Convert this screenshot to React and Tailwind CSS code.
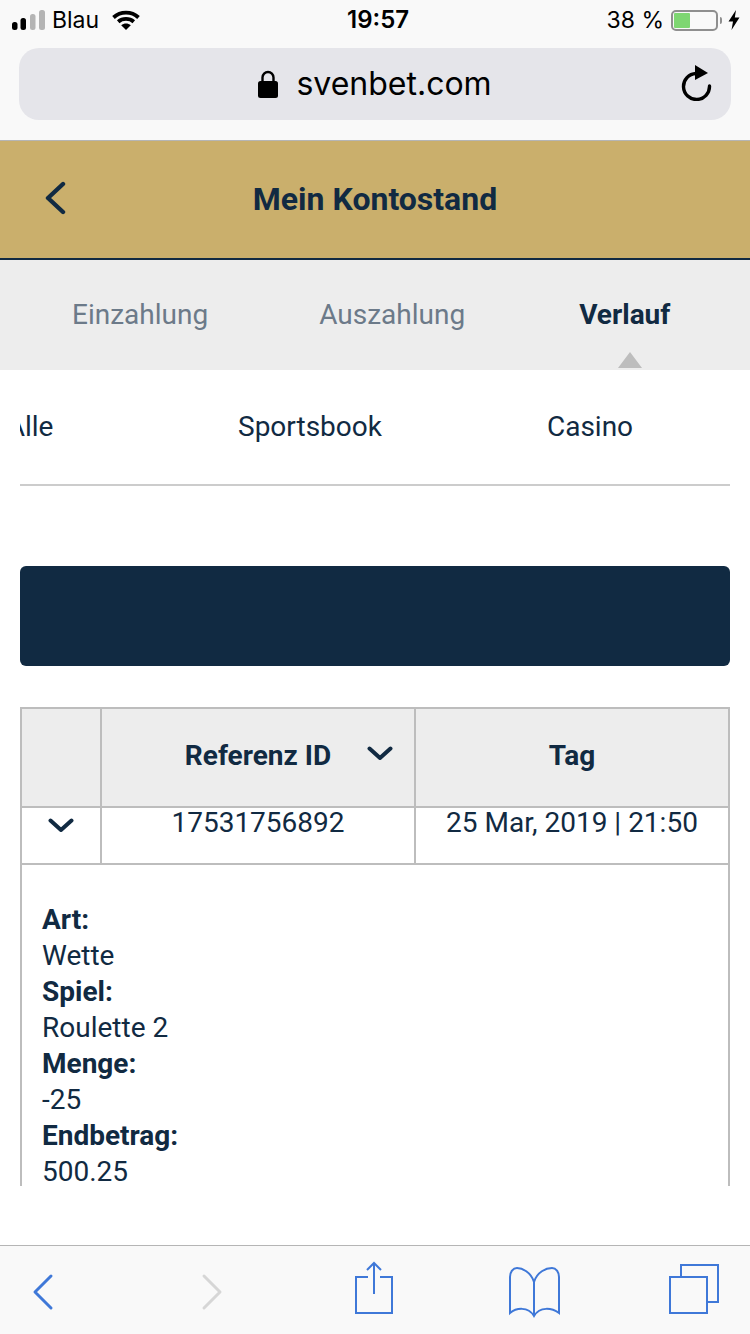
const NAVY = "#112a42";

function Chevron({ className }) {
  return (
    <svg className={className} viewBox="0 0 26 14" fill="none" stroke="#112a42" strokeWidth="4" strokeLinecap="round" strokeLinejoin="round">
      <path d="M2.5 2.5 13 12 23.5 2.5" />
    </svg>
  );
}

function StatusBar() {
  return (
    <div className="relative flex h-[40px] items-center pl-[12px] pr-[10px] font-['Inter',sans-serif] text-[23px] text-black">
      {/* signal */}
      <svg className="h-[20px] w-[34px]" viewBox="0 0 34 20">
        <rect x="0" y="12" width="5.5" height="8" rx="2.5" fill="#000" />
        <rect x="8.5" y="8" width="5.5" height="12" rx="2.5" fill="#000" />
        <rect x="18" y="4" width="5.5" height="16" rx="2.5" fill="#b4b4b4" />
        <rect x="27" y="0" width="6" height="20" rx="2.5" fill="#b4b4b4" />
      </svg>
      <span className="ml-[6px] leading-none">Blau</span>
      <svg className="ml-[13px] h-[20px] w-[28px]" viewBox="0 0 28 20" fill="none" stroke="#000">
        <path d="M1.5 7.5C8.5 1 19.5 1 26.5 7.5" strokeWidth="3.8" />
        <path d="M6.2 11.8C10.6 8 17.4 8 21.8 11.8" strokeWidth="3.8" />
        <path d="M14 20 9.2 15.2C12 13 16 13 18.8 15.2Z" fill="#000" stroke="none" />
      </svg>
      <span className="absolute left-[347px] text-[24px] font-semibold leading-none">19:57</span>
      <div className="ml-auto flex items-center">
        <span className="leading-none">38 %</span>
        <div className="ml-[7px] flex h-[21px] w-[47px] items-stretch rounded-[5px] border-2 border-[#8f8f8f] p-[1px]">
          <div className="w-[16px] rounded-[1px] bg-[#7ed672]" />
        </div>
        <div className="ml-[2px] h-[7px] w-[2px] rounded-r-full bg-[#8f8f8f]" />
        <svg className="ml-[6px] h-[20px] w-[12px]" viewBox="0 0 12 20" fill="#000">
          <path d="M8 0 0.5 11.5H5L3.5 20 11.5 7.5H6.8Z" />
        </svg>
      </div>
    </div>
  );
}

function UrlBar() {
  return (
    <div className="relative mx-[19px] mt-[8px] flex h-[72px] items-center justify-center rounded-[20px] bg-[#e5e5ea]">
      <svg className="h-[28px] w-[20px]" viewBox="0 0 20 28">
        <path d="M4.5 12V7.5a5.5 5.5 0 0 1 11 0V12" fill="none" stroke="#000" strokeWidth="2.4" />
        <rect x="0" y="11" width="20" height="17" rx="2.5" fill="#000" />
      </svg>
      <span className="ml-[18px] font-['Inter',sans-serif] text-[32px] leading-none text-black">svenbet.com</span>
      <svg className="absolute right-[18px] top-[17px] h-[36px] w-[32px]" viewBox="0 0 32 36" fill="none">
        <path d="M15 8.5A13 13 0 1 0 28.5 21" stroke="#000" strokeWidth="3.4" strokeLinecap="round" />
        <path d="M14 0 27 8 14 15Z" fill="#000" />
      </svg>
    </div>
  );
}

function SafariToolbar() {
  return (
    <div className="relative h-[89px] border-t border-[#b5b5b5] bg-[#f9f9f9]">
      <svg className="h-[88px] w-[750px]" viewBox="0 1246 750 88" fill="none" stroke="#3f78d8" strokeWidth="2">
        {/* back and forward */}
        <path d="M51 1276 35 1292 51 1308" strokeWidth="3" strokeLinecap="round" strokeLinejoin="round" />
        <path d="M204 1276 220 1292 204 1308" stroke="#d6d6d6" strokeWidth="3" strokeLinecap="round" strokeLinejoin="round" />
        {/* share */}
        <path d="M368 1277H356V1313H392V1277H380" />
        <path d="M374 1294V1263M367 1270 374 1263 381 1270" />
        {/* bookmarks */}
        <path d="M534 1316V1282C531 1272 522 1268 517 1268 513 1268 510 1272 510 1277V1313C516 1308 528 1306 534 1316 540 1306 552 1308 559 1313V1277C559 1272 556 1268 552 1268 546 1268 537 1272 534 1282" />
        {/* tabs */}
        <rect x="670" y="1277" width="37" height="36" />
        <path d="M681 1277V1265H718V1302H708" />
      </svg>
    </div>
  );
}

export default function App() {
  return (
    <div className="flex h-[1334px] w-[750px] flex-col overflow-hidden bg-white font-['Roboto',sans-serif] text-[#112a42]">
      <div className="h-[141px] border-b border-[#b5b5b5] bg-[#f9f9f9]">
        <StatusBar />
        <UrlBar />
      </div>

      {/* Header */}
      <div className="relative flex h-[119px] items-center justify-center border-b-2 border-[#112a42] bg-[#caaf6c] pb-[2px]">
        <svg className="absolute left-[44px] top-[40px] h-[34px] w-[22px]" viewBox="0 0 22 34" fill="none" stroke={NAVY} strokeWidth="4.4" strokeLinecap="round" strokeLinejoin="round">
          <path d="M19 3 4 17 19 31" />
        </svg>
        <span className="text-[32px] font-bold leading-none">Mein Kontostand</span>
      </div>

      {/* Main tabs */}
      <div className="relative flex h-[110px] items-center bg-[#ededed] pl-[72px] text-[28px] leading-none text-[#6c7a89]">
        <span>Einzahlung</span>
        <span className="ml-[111px]">Auszahlung</span>
        <span className="ml-[114px] font-bold text-[#112a42]">Verlauf</span>
        <div className="absolute bottom-[2px] left-[618px] h-0 w-0 border-x-[12px] border-b-[16px] border-x-transparent border-b-[#bdbdbd]" />
      </div>

      {/* Sub tabs */}
      <div className="mx-[20px] flex h-[116px] overflow-hidden border-b-2 border-[#cccccc] pb-[1px] text-[28px] leading-none">
        <div className="ml-[-130px] flex w-[280px] shrink-0 items-center justify-center">Alle</div>
        <div className="flex w-[280px] shrink-0 items-center justify-center">Sportsbook</div>
        <div className="flex w-[280px] shrink-0 items-center justify-center">Casino</div>
      </div>

      <div className="mx-[20px] mt-[80px] h-[100px] rounded-[6px] bg-[#112a42]" />

      {/* Table */}
      <div className="mx-[20px] mt-[41px] h-[479px] overflow-hidden border-x-2 border-t-2 border-[#bdbdbd]">
        <div className="grid h-[99px] grid-cols-[80px_314px_1fr] border-b-2 border-[#bdbdbd] bg-[#ededed] text-[28px] font-bold leading-none">
          <div className="border-r-2 border-[#bdbdbd]" />
          <div className="relative flex items-center justify-center border-r-2 border-[#bdbdbd] pb-[4px]">
            Referenz ID
            <Chevron className="absolute left-[265px] top-[37px] h-[14px] w-[26px]" />
          </div>
          <div className="flex items-center justify-center pb-[4px]">Tag</div>
        </div>
        <div className="grid h-[57px] grid-cols-[80px_314px_1fr] border-b-2 border-[#bdbdbd] text-[28px] leading-none">
          <div className="flex justify-center border-r-2 border-[#bdbdbd] pt-[10px]">
            <Chevron className="h-[14px] w-[26px]" />
          </div>
          <div className="border-r-2 border-[#bdbdbd] pt-[1px] text-center">17531756892</div>
          <div className="pt-[1px] text-center">25 Mar, 2019 | 21:50</div>
        </div>
        <div className="pl-[20px] pt-[37px] text-[28px] leading-[36px]">
          <div className="font-bold">Art:</div>
          <div>Wette</div>
          <div className="font-bold">Spiel:</div>
          <div>Roulette 2</div>
          <div className="font-bold">Menge:</div>
          <div>-25</div>
          <div className="font-bold">Endbetrag:</div>
          <div>500.25</div>
        </div>
      </div>

      <div className="flex-1" />
      <SafariToolbar />
    </div>
  );
}
